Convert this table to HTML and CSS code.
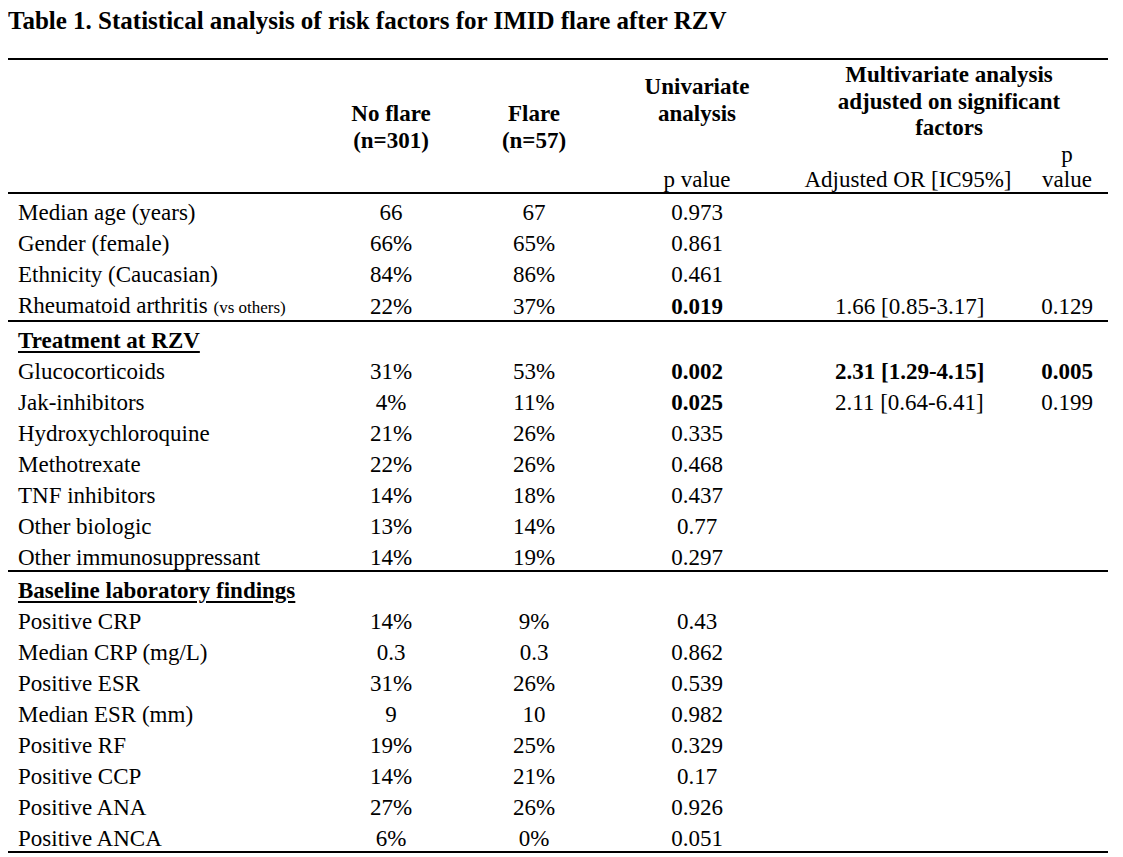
FILE: index.html
```html
<!DOCTYPE html>
<html lang="en">
<head>
<meta charset="utf-8">
<title>Table 1</title>
<link rel="stylesheet" href="styles.css">
</head>
<body>
<h1 class="title">Table 1. Statistical analysis of risk factors for IMID flare after RZV</h1>
<table class="stats">
  <colgroup>
    <col class="c-label">
    <col class="c-noflare">
    <col class="c-flare">
    <col class="c-uni">
    <col class="c-or">
    <col class="c-p">
  </colgroup>
  <thead>
    <tr class="head-top">
      <th rowspan="2"></th>
      <th rowspan="2" class="grp">No flare<br>(n=301)</th>
      <th rowspan="2" class="grp">Flare<br>(n=57)</th>
      <th class="uni">Univariate<br>analysis</th>
      <th colspan="2" class="multi">Multivariate analysis<br>adjusted on significant<br>factors</th>
    </tr>
    <tr class="head-sub">
      <th class="sub">p value</th>
      <th class="sub">Adjusted OR [IC95%]</th>
      <th class="sub">p<br>value</th>
    </tr>
  </thead>
  <tbody class="section">
    <tr><td class="label">Median age (years)</td><td>66</td><td>67</td><td>0.973</td><td class="or"></td><td></td></tr>
    <tr><td class="label">Gender (female)</td><td>66%</td><td>65%</td><td>0.861</td><td class="or"></td><td></td></tr>
    <tr><td class="label">Ethnicity (Caucasian)</td><td>84%</td><td>86%</td><td>0.461</td><td class="or"></td><td></td></tr>
    <tr><td class="label">Rheumatoid arthritis <span class="small">(vs others)</span></td><td>22%</td><td>37%</td><td class="b">0.019</td><td class="or">1.66 [0.85-3.17]</td><td>0.129</td></tr>
  </tbody>
  <tbody class="section">
    <tr><td class="label heading" colspan="6"><span>Treatment at RZV</span></td></tr>
    <tr><td class="label">Glucocorticoids</td><td>31%</td><td>53%</td><td class="b">0.002</td><td class="or b">2.31 [1.29-4.15]</td><td class="b">0.005</td></tr>
    <tr><td class="label">Jak-inhibitors</td><td>4%</td><td>11%</td><td class="b">0.025</td><td class="or">2.11 [0.64-6.41]</td><td>0.199</td></tr>
    <tr><td class="label">Hydroxychloroquine</td><td>21%</td><td>26%</td><td>0.335</td><td class="or"></td><td></td></tr>
    <tr><td class="label">Methotrexate</td><td>22%</td><td>26%</td><td>0.468</td><td class="or"></td><td></td></tr>
    <tr><td class="label">TNF inhibitors</td><td>14%</td><td>18%</td><td>0.437</td><td class="or"></td><td></td></tr>
    <tr><td class="label">Other biologic</td><td>13%</td><td>14%</td><td>0.77</td><td class="or"></td><td></td></tr>
    <tr><td class="label">Other immunosuppressant</td><td>14%</td><td>19%</td><td>0.297</td><td class="or"></td><td></td></tr>
  </tbody>
  <tbody class="section">
    <tr><td class="label heading" colspan="6"><span>Baseline laboratory findings</span></td></tr>
    <tr><td class="label">Positive CRP</td><td>14%</td><td>9%</td><td>0.43</td><td class="or"></td><td></td></tr>
    <tr><td class="label">Median CRP (mg/L)</td><td>0.3</td><td>0.3</td><td>0.862</td><td class="or"></td><td></td></tr>
    <tr><td class="label">Positive ESR</td><td>31%</td><td>26%</td><td>0.539</td><td class="or"></td><td></td></tr>
    <tr><td class="label">Median ESR (mm)</td><td>9</td><td>10</td><td>0.982</td><td class="or"></td><td></td></tr>
    <tr><td class="label">Positive RF</td><td>19%</td><td>25%</td><td>0.329</td><td class="or"></td><td></td></tr>
    <tr><td class="label">Positive CCP</td><td>14%</td><td>21%</td><td>0.17</td><td class="or"></td><td></td></tr>
    <tr><td class="label">Positive ANA</td><td>27%</td><td>26%</td><td>0.926</td><td class="or"></td><td></td></tr>
    <tr><td class="label">Positive ANCA</td><td>6%</td><td>0%</td><td>0.051</td><td class="or"></td><td></td></tr>
  </tbody>
</table>
</body>
</html>
```

FILE: styles.css
```css
html, body {
  background: #ffffff;
}

body {
  margin: 8px;
  color: #000000;
  font-family: "Liberation Serif", "Times New Roman", serif;
  font-size: 23px;
}

.title {
  margin: 0 0 24px 0;
  font-size: 25px;
  line-height: 26px;
  font-weight: bold;
}

.stats {
  width: 1100px;
  border-collapse: collapse;
  table-layout: fixed;
  border-top: 2px solid #000;
}

.c-label { width: 310px; }
.c-noflare { width: 146px; }
.c-flare { width: 140px; }
.c-uni { width: 186px; }
.c-or { width: 236px; }
.c-p { width: 82px; }

.stats thead {
  border-bottom: 2px solid #000;
}

.stats th {
  padding: 0;
  font-weight: bold;
  line-height: 26.5px;
  text-align: center;
}

.head-top {
  height: 78px;
}

.head-sub {
  height: 50px;
}

.grp, .uni {
  vertical-align: middle;
}

.stats th.grp {
  padding-top: 4px;
}

.multi {
  vertical-align: top;
}

.stats th.multi {
  padding-top: 2px;
}

.stats th.sub {
  font-weight: normal;
  vertical-align: bottom;
  line-height: 25px;
  padding-bottom: 0;
}

.section {
  border-bottom: 2px solid #000;
}

.stats td {
  padding: 7px 0 0 0;
  line-height: 24px;
  text-align: center;
  vertical-align: middle;
  white-space: nowrap;
}

.stats td.label {
  text-align: left;
  padding-left: 10px;
}

.stats td.or {
  text-align: left;
  padding-left: 45px;
}

.b {
  font-weight: bold;
}

.small {
  font-size: 17px;
}

.heading span {
  font-weight: bold;
  text-decoration: underline;
  text-decoration-thickness: 2px;
  text-underline-offset: 3px;
}
```
